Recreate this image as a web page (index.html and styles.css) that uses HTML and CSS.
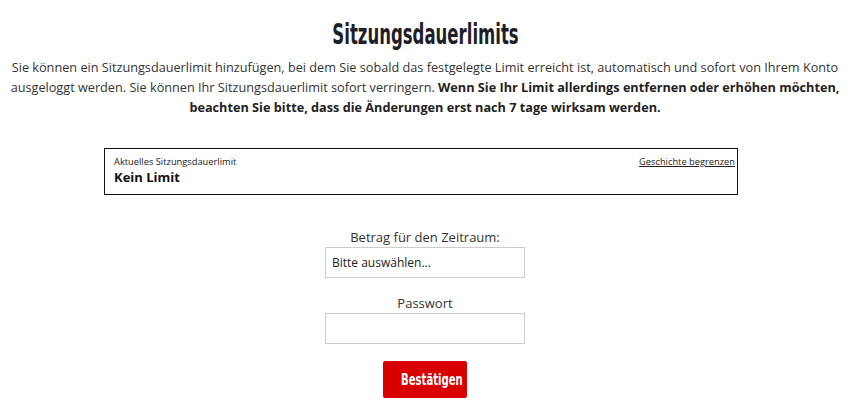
FILE: index.html
```html
<!DOCTYPE html>
<html lang="de">
<head>
    <meta charset="UTF-8">
    <meta name="viewport" content="width=device-width, initial-scale=1.0">
    <title>Sitzungsdauerlimits</title>
    <link rel="stylesheet" href="styles.css">
</head>
<body>
    <div class="container">
        <h1 class="page-title"><span class="narrow">Sitzungsdauerlimits</span></h1>
        <p class="intro">
            Sie können ein Sitzungsdauerlimit hinzufügen, bei dem Sie sobald das festgelegte Limit erreicht ist, automatisch und sofort von Ihrem Konto ausgeloggt werden. Sie können Ihr Sitzungsdauerlimit sofort verringern. <strong>Wenn Sie Ihr Limit allerdings entfernen oder erhöhen möchten, beachten Sie bitte, dass die Änderungen erst nach 7 tage wirksam werden.</strong>
        </p>

        <div class="limit-box">
            <div class="limit-info">
                <span class="limit-label">Aktuelles Sitzungsdauerlimit</span>
                <span class="limit-value">Kein Limit</span>
            </div>
            <a href="#" class="limit-history">Geschichte begrenzen</a>
        </div>

        <form class="limit-form">
            <div class="form-group">
                <label for="period">Betrag für den Zeitraum:</label>
                <select id="period" class="form-control">
                    <option>Bitte auswählen...</option>
                </select>
            </div>
            <div class="form-group">
                <label for="password">Passwort</label>
                <input type="password" id="password" class="form-control">
            </div>
            <button type="button" class="btn-submit"><span class="narrow">Bestätigen</span></button>
        </form>
    </div>
</body>
</html>
```

FILE: styles.css
```css
* {
    margin: 0;
    padding: 0;
    box-sizing: border-box;
}

body {
    font-family: 'Open Sans', 'Noto Sans', sans-serif;
    font-size: 12.7px;
    line-height: 20px;
    color: #333;
    background: #fff;
}

.container {
    padding: 13px 0 0;
}

/* no condensed face installed, so squeeze DejaVu Bold */
.narrow {
    display: inline-block;
    font-family: 'DejaVu Sans', sans-serif;
    font-weight: bold;
    transform: scaleX(0.57);
    white-space: nowrap;
}

/* Title */
.page-title {
    font-size: 29px;
    line-height: 40px;
    color: #1e1e28;
    text-align: center;
    margin-bottom: 3px;
}

.intro {
    text-align: center;
    padding: 0 2px;
}

.intro strong {
    font-weight: 700;
    color: #222;
}

/* Current limit box */
.limit-box {
    width: 634px;
    margin: 31px auto 0 104px;
    border: 1px solid #111;
    padding: 6px 2px 8px 9px;
    display: flex;
    justify-content: space-between;
    align-items: flex-start;
}

.limit-info {
    display: flex;
    flex-direction: column;
}

.limit-label {
    font-size: 9.3px;
    line-height: 13px;
    color: #222;
}

.limit-value {
    font-size: 13px;
    font-weight: 700;
    line-height: 18px;
    color: #111;
}

.limit-history {
    font-size: 9.3px;
    line-height: 13px;
    color: #222;
    text-decoration: underline;
}

/* Form */
.limit-form {
    display: flex;
    flex-direction: column;
    align-items: center;
    margin-top: 33px;
}

.form-group {
    display: flex;
    flex-direction: column;
    align-items: center;
    margin-bottom: 16px;
}

.form-group label {
    font-size: 13px;
    line-height: 18px;
    color: #333;
    margin-bottom: 1px;
}

.form-control {
    width: 200px;
    height: 31px;
    border: 1px solid #ccc;
    background: #fff;
    font-family: 'Open Sans', 'Noto Sans', sans-serif;
    font-size: 12px;
    color: #222;
    padding: 0 6px;
    appearance: none;
    -webkit-appearance: none;
    border-radius: 0;
}

.btn-submit {
    width: 84px;
    height: 37px;
    margin-top: 1px;
    background: #d90000;
    color: #fff;
    border: none;
    border-radius: 2px;
    font-size: 16px;
    line-height: 20px;
    cursor: pointer;
}

.btn-submit .narrow {
    transform: scaleX(0.63);
}
```
